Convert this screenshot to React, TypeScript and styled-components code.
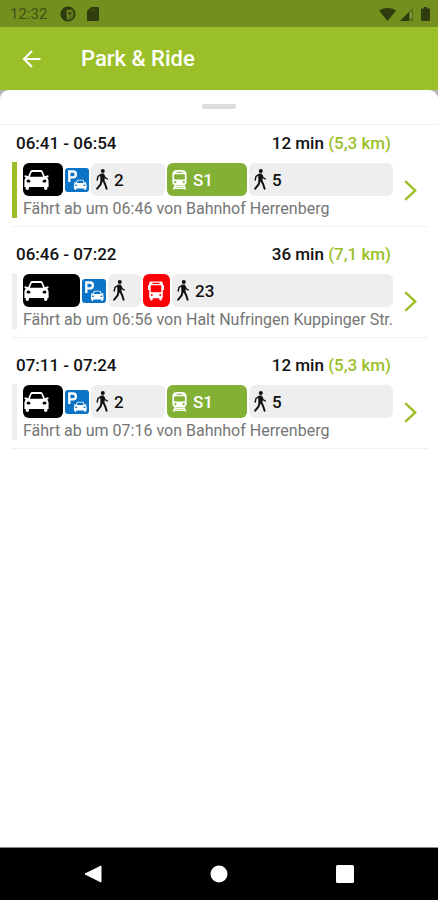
import React from "react";
import styled, { createGlobalStyle } from "styled-components";

const GlobalStyle = createGlobalStyle`
  * { box-sizing: border-box; }
  body {
    margin: 0;
    background: #fff;
    font-family: Roboto, "Liberation Sans", sans-serif;
    color: #111;
  }
  button {
    border: 0;
    padding: 0;
    margin: 0;
    background: none;
    color: inherit;
    font: inherit;
    cursor: pointer;
  }
  svg { display: block; flex: none; }
`;

const Screen = styled.div`
  display: flex;
  flex-direction: column;
  min-height: 100vh;
`;

const StatusBar = styled.div`
  display: flex;
  align-items: center;
  height: 27px;
  padding: 1px 8px 0 10px;
  background: #748f1e;
  color: #2f3c0d;
`;

const Clock = styled.span`
  font-size: 15px;
  line-height: 20px;
  color: #414f16;
  margin-right: 13px;
`;

const StatusGroup = styled.div<{ $gap: number; $end?: boolean }>`
  display: flex;
  align-items: center;
  gap: ${(p) => p.$gap}px;
  margin-left: ${(p) => (p.$end ? "auto" : "0")};
`;

const AppBar = styled.header`
  display: flex;
  align-items: center;
  height: 63px;
  padding: 1px 20px 0;
  gap: 37px;
  background: #9bbf28;
  color: #fff;
`;

const BackButton = styled.button`
  display: grid;
  place-items: center;
  width: 24px;
  height: 24px;
`;

const Title = styled.h1`
  margin: 0;
  font-size: 22px;
  line-height: 28px;
  font-weight: 500;
`;

const SheetBackdrop = styled.main`
  flex: 1;
  display: flex;
  background: #b4b4b4;
`;

const Sheet = styled.section`
  flex: 1;
  min-width: 0;
  background: #fff;
  border-radius: 9px 9px 0 0;
`;

const HandleArea = styled.div`
  display: flex;
  justify-content: center;
  height: 35px;
  padding-top: 14px;
  border-bottom: 1px solid #f1f1f1;
`;

const Handle = styled.div`
  width: 34px;
  height: 5px;
  border-radius: 2px;
  background: #dcdcdc;
`;

const RouteList = styled.ul`
  list-style: none;
  margin: 0;
  padding: 0 10px 0 12px;
  display: flex;
  flex-direction: column;
  gap: 9px;
`;

const RouteCard = styled.li`
  padding: 8px 0;
  border-bottom: 1px solid #f1f1f1;
`;

const Summary = styled.div`
  display: flex;
  justify-content: space-between;
  padding: 0 37px 0 4px;
  margin-bottom: 9px;
  font-size: 17px;
  line-height: 20px;
  font-weight: 500;
`;

const Distance = styled.span`
  color: #9bbf28;
`;

const RouteBody = styled.div`
  display: flex;
`;

const Marker = styled.div<{ $active: boolean }>`
  width: 5px;
  margin-right: 6px;
  background: ${(p) => (p.$active ? "#9bbf28" : "#eee")};
`;

const Details = styled.div`
  flex: 1;
  min-width: 0;
  padding-top: 1px;
`;

const Legs = styled.div`
  display: flex;
  align-items: center;
  gap: 2px;
  height: 33px;
  margin-bottom: 4px;
`;

type Tone = "car" | "walk" | "rail" | "bus";

const tones: Record<Tone, { bg: string; fg: string; inset: number }> = {
  car: { bg: "#000", fg: "#fff", inset: 1 },
  walk: { bg: "#eee", fg: "#111", inset: 5 },
  rail: { bg: "#82b135", fg: "#fff", inset: 5 },
  bus: { bg: "#fb0007", fg: "#fff", inset: 5 },
};

const Leg = styled.div<{ $tone: Tone; $share: number }>`
  display: flex;
  align-items: center;
  gap: 6px;
  flex: ${(p) => `${p.$share} 1 ${p.$share}px`};
  min-width: 0;
  height: 33px;
  padding-left: ${(p) => tones[p.$tone].inset}px;
  border-radius: 6px;
  background: ${(p) => tones[p.$tone].bg};
  color: ${(p) => tones[p.$tone].fg};
  font-size: 17px;
  line-height: 20px;
  font-weight: 500;
`;

const Departure = styled.p`
  margin: 0;
  font-size: 16px;
  line-height: 18px;
  color: #757575;
  white-space: nowrap;
`;

const OpenButton = styled.button`
  display: grid;
  place-items: center;
  width: 35px;
  color: #9bbf28;
`;

const NavBar = styled.nav`
  display: grid;
  grid-template-columns: repeat(3, 1fr);
  height: 53px;
  padding: 0 7%;
  border-top: 1px solid #8a8a8a;
  background: #000;
  color: #fff;
`;

const NavButton = styled.button`
  display: grid;
  place-items: center;
`;

const AppIcon = () => (
  <svg width="16" height="16" viewBox="0 0 16 16" aria-hidden="true">
    <circle cx="8" cy="8" r="6.8" fill="none" stroke="currentColor" strokeWidth="1.600" />
    <path d="M8 1.200A6.800 6.800 0 0 0 5.600 14.400V4.200H11V8H8.600v3.200H7v3.600A6.800 6.800 0 0 0 8 1.200z" fill="currentColor" opacity=".35" />
    <path d="M1.400 8A6.600 6.600 0 0 1 6 1.700h4.500V4H6.800v10.500A6.600 6.600 0 0 1 1.400 8zM8.400 6h2.400v2.400H8.400z" fill="currentColor" />
  </svg>
);

const SdIcon = () => (
  <svg width="12" height="14" viewBox="0 0 12 14" aria-hidden="true">
    <path d="M4 0h7a1 1 0 0 1 1 1v12a1 1 0 0 1-1 1H1a1 1 0 0 1-1-1V4z" fill="currentColor" />
    <path d="M4 2.4v2.4M6.4 2.4v2.4M8.8 2.4v2.4" stroke="#748f1e" strokeWidth="1" opacity=".4" />
  </svg>
);

const WifiIcon = () => (
  <svg width="17" height="13" viewBox="0 0 17 13" aria-hidden="true">
    <path d="M8.500 13L0 2.600C2.300.9 5.300 0 8.500 0s6.200.9 8.500 2.600z" fill="currentColor" />
  </svg>
);

const SignalIcon = () => (
  <svg width="13" height="13" viewBox="0 0 13 13" aria-hidden="true">
    <path d="M13 0v13H0z" fill="currentColor" opacity=".4" />
    <path d="M9 4v9H0z" fill="currentColor" />
    <path d="M11 4.600v5.800" stroke="#8fa650" strokeWidth="1.600" />
  </svg>
);

const BatteryIcon = () => (
  <svg width="9" height="14" viewBox="0 0 9 14" aria-hidden="true">
    <path d="M3 0h3v1.400h2a1 1 0 0 1 1 1V13a1 1 0 0 1-1 1H1a1 1 0 0 1-1-1V2.400a1 1 0 0 1 1-1h2z" fill="currentColor" />
  </svg>
);

const BackIcon = () => (
  <svg width="24" height="24" viewBox="0 0 24 24" aria-hidden="true">
    <path d="M20.500 12H4.500M12 4L4 12l8 8" fill="none" stroke="currentColor" strokeWidth="2.200" />
  </svg>
);

const carShape =
  "M6.200 1.600C6.600.6 7.300 0 8.400 0h8.200c1.100 0 1.800.6 2.200 1.600l2 4.700 2.300-.9c.8-.3 1.500.1 1.500.8 0 .8-.6 1.300-1.700 1.400 1.200 1 1.700 2.200 1.700 3.700V17h-1.200v1.600c0 .9-.6 1.400-1.600 1.400s-1.700-.5-1.700-1.400V17H4.900v1.600c0 .9-.6 1.400-1.600 1.400s-1.700-.5-1.700-1.400V17H.4v-5.700c0-1.500.5-2.700 1.700-3.700C1 7.500.4 7 .4 6.200c0-.7.700-1.100 1.500-.8l2.300.9zM8.300 1.900c-.4 0-.6.2-.8.600L5.900 6.800h13.200l-1.600-4.300c-.2-.4-.4-.6-.8-.6zM4.300 9.400a1.700 1.500 0 1 0 0 3.100c1 0 2.200-.3 2.200-1.100 0-1-1.200-2-2.200-2zM20.700 9.400c-1 0-2.200 1-2.200 2 0 .8 1.200 1.100 2.200 1.100a1.700 1.500 0 1 0 0-3.100z";

const CarIcon = () => (
  <svg width="25" height="20" viewBox="0 0 25 20" aria-label="Auto" role="img">
    <path d={carShape} fill="currentColor" fillRule="evenodd" />
  </svg>
);

const ParkIcon = () => (
  <svg width="24" height="24" viewBox="0 0 24 24" aria-label="Parken" role="img">
    <rect width="24" height="24" rx="3" fill="#0b74c6" />
    <path d="M4.300 14V3.500h3.700a2.900 2.900 0 0 1 0 5.800H4.300" fill="none" stroke="#fff" strokeWidth="2.300" />
    <svg x="8.500" y="11.500" width="13.500" height="10.500" viewBox="0 0 25 20">
      <path d={carShape} fill="#fff" fillRule="evenodd" />
    </svg>
  </svg>
);

const WalkIcon = () => (
  <svg width="12" height="21" viewBox="0 0 12 21" aria-label="Zu Fuß" role="img">
    <circle cx="6.800" cy="2.100" r="2" fill="currentColor" />
    <path d="M4.700 5.200L7.600 4.900 8.200 8 8 11.800 5 12z" fill="currentColor" stroke="currentColor" strokeWidth="1" strokeLinejoin="round" />
    <path d="M5 5.500L2 7.400 1.200 11M7.900 6.200L9 8.600 11.300 10" fill="none" stroke="currentColor" strokeWidth="1.400" strokeLinecap="round" strokeLinejoin="round" />
    <path d="M5.600 11.500L4.600 15.400 1.200 19.600M7.200 11.500L9 14.800 10.600 19.700" fill="none" stroke="currentColor" strokeWidth="2" strokeLinecap="round" strokeLinejoin="round" />
  </svg>
);

const RailIcon = () => (
  <svg width="15" height="20" viewBox="0 0 15 20" aria-label="S-Bahn" role="img">
    <path
      fill="currentColor"
      fillRule="evenodd"
      d="M4.500 0h6C13 .3 14.600 1.600 14.600 4v8c0 1.900-1 3-2.800 3H3.200C1.400 15 .4 13.900.4 12V4C.4 1.600 2 .3 4.500 0zM4.500 1.700v1.100h6V1.700zM3 4.300c-.6 0-.9.3-.9.900v3.400c0 .6.300.9.900.9h9c.6 0 .9-.3.900-.9V5.200c0-.6-.3-.9-.9-.9zM3.300 11a1.100 1.100 0 1 0 0 2.200 1.100 1.100 0 0 0 0-2.200zM11.700 11a1.100 1.100 0 1 0 0 2.200 1.100 1.100 0 0 0 0-2.200z"
    />
    <path d="M3.200 15L1.400 19.500M11.800 15l1.800 4.500M3 16.200h9M2 18.300h11" fill="none" stroke="currentColor" strokeWidth="1.400" />
  </svg>
);

const BusIcon = () => (
  <svg width="16" height="20" viewBox="0 0 16 20" aria-label="Bus" role="img">
    <path
      fill="currentColor"
      fillRule="evenodd"
      d="M3 .5h10c1.200 0 1.800.6 1.800 1.700V4h1.200v5h-1.200v7.200c0 .6-.4 1-1 1v1.600c0 .5-.4.800-1.200.8s-1.300-.3-1.300-.8v-1.600H4.700v1.600c0 .5-.4.800-1.200.8s-1.300-.3-1.300-.8v-1.600c-.6 0-1-.4-1-1V9H0V4h1.200V2.200C1.200 1.100 1.800.5 3 .5zM4.500 1.800V3h7V1.800zM3.300 4.300c-.4 0-.6.2-.6.600v5.800c0 .4.200.6.600.6h9.400c.4 0 .6-.2.6-.6V4.900c0-.4-.2-.6-.6-.6zM3.800 13a1 1 0 1 0 0 2 1 1 0 0 0 0-2zM12.200 13a1 1 0 1 0 0 2 1 1 0 0 0 0-2z"
    />
  </svg>
);

const ChevronIcon = () => (
  <svg width="13" height="21" viewBox="0 0 13 21" aria-hidden="true">
    <path d="M1.200 1.200L11.300 10.500 1.200 19.800" fill="none" stroke="currentColor" strokeWidth="2.400" />
  </svg>
);

const icons: Record<Tone, React.ComponentType> = {
  car: CarIcon,
  walk: WalkIcon,
  rail: RailIcon,
  bus: BusIcon,
};

type LegData = { kind: Tone; share: number; label?: string } | { kind: "park" };

interface RouteData {
  time: string;
  duration: string;
  distance: string;
  departure: string;
  legs: LegData[];
}

const viaHerrenberg: LegData[] = [
  { kind: "car", share: 40 },
  { kind: "park" },
  { kind: "walk", share: 74, label: "2" },
  { kind: "rail", share: 80, label: "S1" },
  { kind: "walk", share: 144, label: "5" },
];

const routes: RouteData[] = [
  {
    time: "06:41 - 06:54",
    duration: "12 min",
    distance: "(5,3 km)",
    departure: "Fährt ab um 06:46 von Bahnhof Herrenberg",
    legs: viaHerrenberg,
  },
  {
    time: "06:46 - 07:22",
    duration: "36 min",
    distance: "(7,1 km)",
    departure: "Fährt ab um 06:56 von Halt Nufringen Kuppinger Str.",
    legs: [
      { kind: "car", share: 57 },
      { kind: "park" },
      { kind: "walk", share: 33 },
      { kind: "bus", share: 27 },
      { kind: "walk", share: 221, label: "23" },
    ],
  },
  {
    time: "07:11 - 07:24",
    duration: "12 min",
    distance: "(5,3 km)",
    departure: "Fährt ab um 07:16 von Bahnhof Herrenberg",
    legs: viaHerrenberg,
  },
];

function LegItem({ leg }: { leg: LegData }) {
  if (leg.kind === "park") return <ParkIcon />;
  const Icon = icons[leg.kind];
  return (
    <Leg $tone={leg.kind} $share={leg.share}>
      <Icon />
      {leg.label && <span>{leg.label}</span>}
    </Leg>
  );
}

export default function App() {
  return (
    <Screen>
      <GlobalStyle />
      <StatusBar>
        <Clock>12:32</Clock>
        <StatusGroup $gap={11}>
          <AppIcon />
          <SdIcon />
        </StatusGroup>
        <StatusGroup $gap={4} $end>
          <WifiIcon />
          <SignalIcon />
          <span />
          <BatteryIcon />
        </StatusGroup>
      </StatusBar>
      <AppBar>
        <BackButton type="button" aria-label="Zurück">
          <BackIcon />
        </BackButton>
        <Title>Park &amp; Ride</Title>
      </AppBar>
      <SheetBackdrop>
        <Sheet>
          <HandleArea>
            <Handle />
          </HandleArea>
          <RouteList>
            {routes.map((route, index) => (
              <RouteCard key={route.time}>
                <Summary>
                  <span>{route.time}</span>
                  <span>
                    {route.duration} <Distance>{route.distance}</Distance>
                  </span>
                </Summary>
                <RouteBody>
                  <Marker $active={index === 0} />
                  <Details>
                    <Legs>
                      {route.legs.map((leg, i) => (
                        <LegItem key={i} leg={leg} />
                      ))}
                    </Legs>
                    <Departure>{route.departure}</Departure>
                  </Details>
                  <OpenButton type="button" aria-label="Details anzeigen">
                    <ChevronIcon />
                  </OpenButton>
                </RouteBody>
              </RouteCard>
            ))}
          </RouteList>
        </Sheet>
      </SheetBackdrop>
      <NavBar>
        <NavButton type="button" aria-label="Zurück">
          <svg width="18" height="18" viewBox="0 0 18 18" aria-hidden="true">
            <path d="M17 1v16L1 9z" fill="currentColor" stroke="currentColor" strokeLinejoin="round" />
          </svg>
        </NavButton>
        <NavButton type="button" aria-label="Startseite">
          <svg width="18" height="18" viewBox="0 0 18 18" aria-hidden="true">
            <circle cx="9" cy="9" r="8.500" fill="currentColor" />
          </svg>
        </NavButton>
        <NavButton type="button" aria-label="Übersicht">
          <svg width="18" height="18" viewBox="0 0 18 18" aria-hidden="true">
            <rect width="18" height="18" rx="1.500" fill="currentColor" />
          </svg>
        </NavButton>
      </NavBar>
    </Screen>
  );
}
